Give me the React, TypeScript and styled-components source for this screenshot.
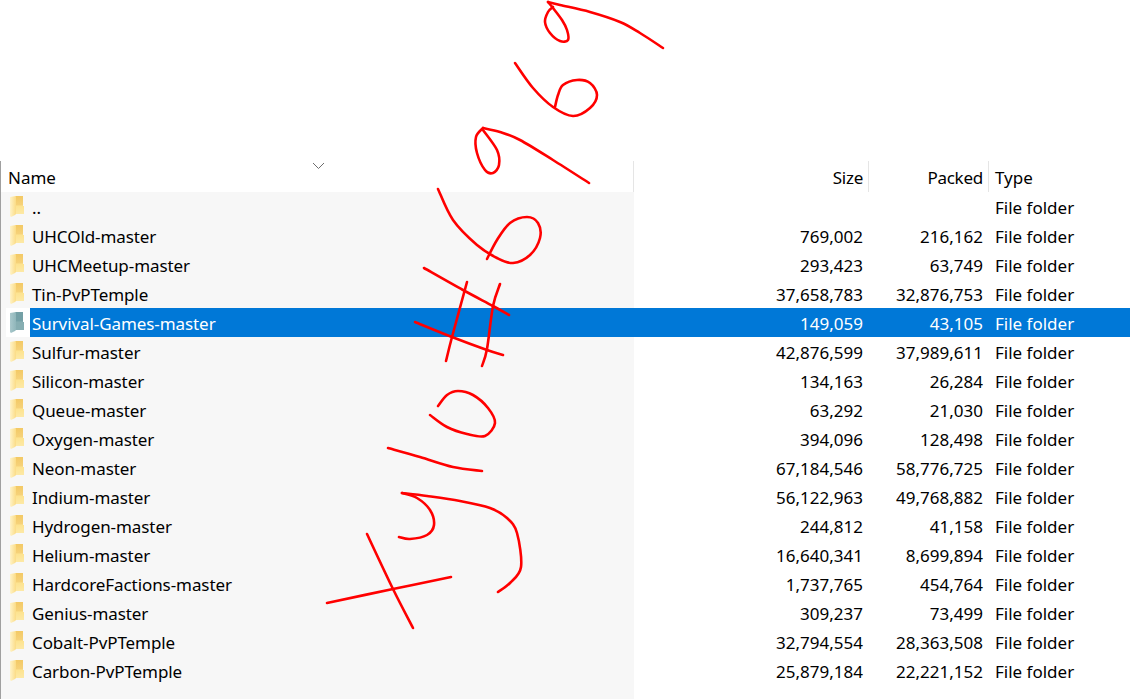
import React from "react";
import styled, { createGlobalStyle } from "styled-components";

type FileRow = { name: string; size?: string; packed?: string; selected?: boolean };
type Point = [number, number];

const rows: FileRow[] = [
  { name: ".." },
  { name: "UHCOld-master", size: "769,002", packed: "216,162" },
  { name: "UHCMeetup-master", size: "293,423", packed: "63,749" },
  { name: "Tin-PvPTemple", size: "37,658,783", packed: "32,876,753" },
  { name: "Survival-Games-master", size: "149,059", packed: "43,105", selected: true },
  { name: "Sulfur-master", size: "42,876,599", packed: "37,989,611" },
  { name: "Silicon-master", size: "134,163", packed: "26,284" },
  { name: "Queue-master", size: "63,292", packed: "21,030" },
  { name: "Oxygen-master", size: "394,096", packed: "128,498" },
  { name: "Neon-master", size: "67,184,546", packed: "58,776,725" },
  { name: "Indium-master", size: "56,122,963", packed: "49,768,882" },
  { name: "Hydrogen-master", size: "244,812", packed: "41,158" },
  { name: "Helium-master", size: "16,640,341", packed: "8,699,894" },
  { name: "HardcoreFactions-master", size: "1,737,765", packed: "454,764" },
  { name: "Genius-master", size: "309,237", packed: "73,499" },
  { name: "Cobalt-PvPTemple", size: "32,794,554", packed: "28,363,508" },
  { name: "Carbon-PvPTemple", size: "25,879,184", packed: "22,221,152" },
];

// handwriting on top of the list, traced from the screenshot
const inkStrokes: Point[][] = [
  [[663, 48], [640, 33], [620, 22], [590, 12], [560, 5], [548, 2]],
  [[548, 2], [553, 8], [562, 20], [567, 30], [568, 40], [560, 41], [550, 33], [545, 22], [548, 12], [553, 7]],
  [[515, 63], [533, 88], [553, 107], [573, 116], [590, 108], [597, 95], [590, 83], [577, 80], [563, 85], [558, 95], [555, 107]],
  [[589, 183], [553, 160], [520, 140], [500, 132], [483, 128]],
  [[483, 128], [476, 137], [477, 153], [485, 170], [493, 173], [499, 165], [497, 150], [483, 130]],
  [[438, 189], [453, 220], [477, 245], [497, 258], [513, 263], [530, 255], [540, 238], [538, 223], [527, 217], [510, 223], [497, 240], [487, 259]],
  [[424, 268], [463, 290], [493, 306], [509, 315]],
  [[415, 322], [452, 337], [487, 350], [503, 355]],
  [[467, 282], [452, 337], [446, 361]],
  [[500, 284], [493, 306], [487, 349], [482, 366]],
  [[438, 406], [447, 395], [458, 391], [473, 395], [488, 408], [495, 423], [485, 436], [467, 434], [447, 427], [430, 415]],
  [[388, 448], [420, 457], [453, 467], [482, 471]],
  [[399, 537], [410, 539], [427, 535], [434, 525], [430, 510], [417, 498], [402, 493]],
  [[402, 493], [427, 496], [460, 501], [490, 508], [507, 518], [517, 533], [521, 567], [510, 583], [498, 592]],
  [[327, 603], [393, 589], [451, 577]],
  [[367, 534], [393, 589], [413, 628]],
];

// catmull-rom through the traced points
const smoothPath = (pts: Point[]) => {
  let d = `M${pts[0][0]} ${pts[0][1]}`;
  for (let i = 0; i < pts.length - 1; i++) {
    const p0 = pts[i - 1] ?? pts[i];
    const p1 = pts[i];
    const p2 = pts[i + 1];
    const p3 = pts[i + 2] ?? p2;
    const c1x = p1[0] + (p2[0] - p0[0]) / 6;
    const c1y = p1[1] + (p2[1] - p0[1]) / 6;
    const c2x = p2[0] - (p3[0] - p1[0]) / 6;
    const c2y = p2[1] - (p3[1] - p1[1]) / 6;
    d += ` C${c1x} ${c1y} ${c2x} ${c2y} ${p2[0]} ${p2[1]}`;
  }
  return d;
};

const GlobalStyle = createGlobalStyle`
  html, body {
    margin: 0;
    height: 100%;
    background: #fff;
  }
`;

const Page = styled.div`
  position: relative;
  width: 1130px;
  height: 699px;
  overflow: hidden;
  padding-top: 161px;
  box-sizing: border-box;
  font-family: "Noto Sans", "Open Sans", sans-serif;
  font-size: 17px;
  color: #000;
`;

const List = styled.div`
  height: 538px;
  display: flex;
  flex-direction: column;
  border-left: 1px solid #a0a0a0;
`;

const columns = "633px 235px 120px 1fr";

const Header = styled.div`
  display: grid;
  grid-template-columns: ${columns};
  height: 31px;
  flex: none;
`;

const HeaderCell = styled.div<{ $right?: boolean; $last?: boolean }>`
  position: relative;
  display: flex;
  align-items: flex-end;
  justify-content: ${(p) => (p.$right ? "flex-end" : "flex-start")};
  padding: 0 ${(p) => (p.$right ? "5px" : "0")} 2px ${(p) => (p.$right ? "0" : p.$last ? "6px" : "7px")};
  line-height: 24px;
  letter-spacing: ${(p) => (p.$right ? "-0.25px" : "0")};
  border-right: ${(p) => (p.$last ? "none" : "1px solid #e5e5e5")};
`;

const SortCaret = styled.svg`
  position: absolute;
  left: 311px;
  top: 1px;
  width: 13px;
  height: 8px;
`;

const Row = styled.div`
  display: grid;
  grid-template-columns: ${columns};
  height: 29px;
  flex: none;
`;

const NameCell = styled.div`
  display: flex;
  padding-left: 5px;
  background: #f7f7f7;
`;

const IconSlot = styled.div<{ $selected?: boolean }>`
  width: 24px;
  height: 29px;
  padding-left: 4px;
  box-sizing: border-box;
  flex: none;
  display: flex;
  align-items: center;
  background: ${(p) => (p.$selected ? "#fff" : "transparent")};
`;

const NameText = styled.div<{ $selected?: boolean }>`
  flex: 1;
  display: flex;
  align-items: center;
  padding: 2px 0 0 2px;
  white-space: nowrap;
  letter-spacing: -0.08px;
  background: ${(p) => (p.$selected ? "#0078d7" : "transparent")};
  color: ${(p) => (p.$selected ? "#fff" : "#000")};
`;

const NumberCell = styled.div<{ $selected?: boolean }>`
  display: flex;
  align-items: center;
  justify-content: flex-end;
  padding: 2px 6px 0 0;
  background: ${(p) => (p.$selected ? "#0078d7" : "transparent")};
  color: ${(p) => (p.$selected ? "#fff" : "#000")};
`;

const TypeCell = styled.div<{ $selected?: boolean }>`
  display: flex;
  align-items: center;
  padding: 2px 0 0 6px;
  background: ${(p) => (p.$selected ? "#0078d7" : "transparent")};
  color: ${(p) => (p.$selected ? "#fff" : "#000")};
`;

const Filler = styled.div`
  flex: 1;
  width: 633px;
  background: #f7f7f7;
`;

const Ink = styled.svg`
  position: absolute;
  left: 0;
  top: 0;
  width: 1130px;
  height: 699px;
  pointer-events: none;
`;

const FolderIcon = ({ selected }: { selected?: boolean }) => (
  <svg width="14" height="21" viewBox="0 0 14 21">
    <defs>
      <linearGradient id={selected ? "backS" : "backN"} x1="0" y1="0" x2="0" y2="1">
        <stop offset="0" stopColor={selected ? "#74a0a6" : "#f3c965"} />
        <stop offset="0.5" stopColor={selected ? "#74a0a6" : "#f6d27a"} />
        <stop offset="0.55" stopColor={selected ? "#86aeb2" : "#fde38f"} />
        <stop offset="1" stopColor={selected ? "#86aeb2" : "#fde9a6"} />
      </linearGradient>
      <linearGradient id={selected ? "leafS" : "leafN"} x1="0" y1="0" x2="1" y2="0">
        <stop offset="0" stopColor={selected ? "#a9c8cc" : "#fff3c9"} />
        <stop offset="1" stopColor={selected ? "#8fb6ba" : "#fbdc85"} />
      </linearGradient>
    </defs>
    <path d="M5 0 L13 0 L13 10 L14 10 L14 18 L5 18 Z" fill={`url(#${selected ? "backS" : "backN"})`} />
    <path d="M0 1 L6 0 L6 18 L5 19 L1 21 L0 20 Z" fill={`url(#${selected ? "leafS" : "leafN"})`} />
  </svg>
);

export default function App() {
  return (
    <Page>
      <GlobalStyle />
      <List>
        <Header>
          <HeaderCell>
            Name
            <SortCaret viewBox="0 0 13 8">
              <path d="M1 1 L6.5 6.5 L12 1" fill="none" stroke="#6d6d6d" strokeWidth="1" />
            </SortCaret>
          </HeaderCell>
          <HeaderCell $right>Size</HeaderCell>
          <HeaderCell $right>Packed</HeaderCell>
          <HeaderCell $last>Type</HeaderCell>
        </Header>
        {rows.map((row) => (
          <Row key={row.name}>
            <NameCell>
              <IconSlot $selected={row.selected}>
                <FolderIcon selected={row.selected} />
              </IconSlot>
              <NameText $selected={row.selected}>{row.name}</NameText>
            </NameCell>
            <NumberCell $selected={row.selected}>{row.size}</NumberCell>
            <NumberCell $selected={row.selected}>{row.packed}</NumberCell>
            <TypeCell $selected={row.selected}>File folder</TypeCell>
          </Row>
        ))}
        <Filler />
      </List>
      <Ink viewBox="0 0 1130 699">
        {inkStrokes.map((pts) => (
          <path key={pts.join()} d={smoothPath(pts)} fill="none" stroke="#f00" strokeWidth="2.6" strokeLinecap="round" strokeLinejoin="round" />
        ))}
      </Ink>
    </Page>
  );
}
